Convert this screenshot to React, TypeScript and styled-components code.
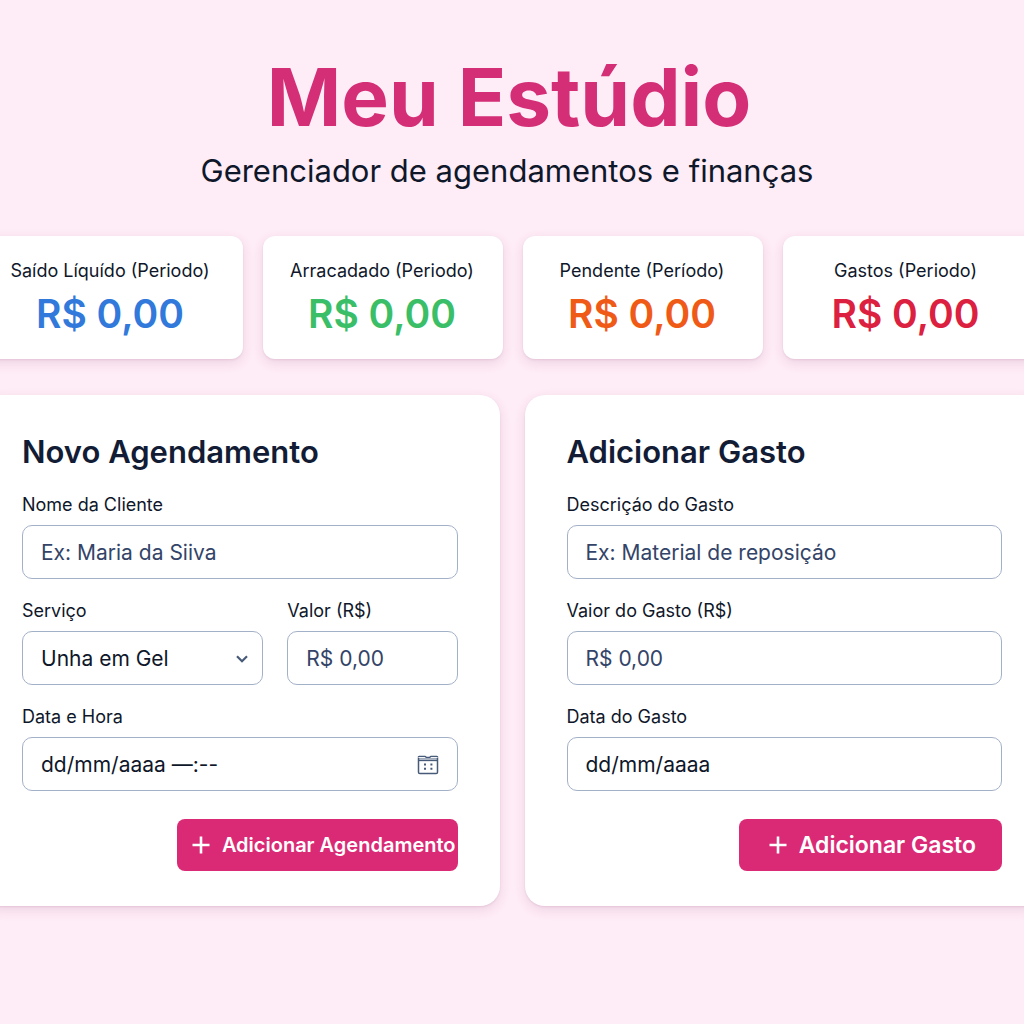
import React, { useState } from "react";
import styled, { createGlobalStyle } from "styled-components";

const GlobalStyle = createGlobalStyle`
  *, *::before, *::after { box-sizing: border-box; }
  body {
    margin: 0;
    min-height: 100vh;
    background: #feecf6;
    color: #0f172a;
    font-family: Inter, "Liberation Sans", sans-serif;
  }
`;

const Page = styled.div`
  overflow: hidden;
  padding: 51px 0 118px;
`;

const Header = styled.header`
  text-align: center;
  margin-bottom: 45px;
  padding-right: 10px;
`;

const Title = styled.h1`
  margin: 0;
  padding-left: 4px;
  color: #d42e77;
  font-size: 80px;
  line-height: 92px;
  font-weight: 700;
`;

const Subtitle = styled.p`
  margin: 8px 0 0;
  font-size: 31px;
  line-height: 40px;
`;

const Bleed = styled.main`
  margin: 0 -20px;
  display: grid;
  grid-template-columns: minmax(0, 1fr);
  gap: 36px;
`;

const Summary = styled.section`
  display: grid;
  grid-template-columns: minmax(0, 263fr) minmax(0, 240fr) minmax(0, 240fr) minmax(0, 261fr);
  gap: 20px;
`;

const StatCard = styled.article<{ $trim: number }>`
  padding: 21px ${(p) => p.$trim}px 20px 0;
  border-radius: 12px;
  background: #fff;
  text-align: center;
  box-shadow: 0 4px 12px rgba(140, 60, 110, 0.14), 0 1px 2px rgba(140, 60, 110, 0.12);
`;

const StatLabel = styled.h2`
  margin: 0;
  font-size: 18px;
  line-height: 28px;
  font-weight: 400;
`;

const StatValue = styled.p<{ $color: string }>`
  margin: 4px 0 0;
  color: ${(p) => p.$color};
  font-size: 39px;
  line-height: 50px;
  font-weight: 600;
`;

const Panels = styled.div`
  display: grid;
  grid-template-columns: repeat(2, minmax(0, 1fr));
  gap: 25px;
`;

const Panel = styled.form`
  padding: 37px 42px 35px;
  border-radius: 20px;
  background: #fff;
  box-shadow: 0 4px 12px rgba(140, 60, 110, 0.14), 0 1px 2px rgba(140, 60, 110, 0.12);
`;

const PanelTitle = styled.h2`
  margin: 0 0 21px;
  color: #131c35;
  font-size: 31px;
  line-height: 40px;
  font-weight: 600;
`;

const Fields = styled.div`
  display: grid;
  grid-template-columns: minmax(0, 1fr);
  gap: 20px;
`;

const FieldRow = styled.div`
  display: grid;
  grid-template-columns: minmax(0, 241fr) minmax(0, 170fr);
  gap: 24px;
`;

const Field = styled.div`
  display: grid;
  grid-template-columns: minmax(0, 1fr);
  gap: 8px;
`;

const Label = styled.label`
  font-size: 18px;
  line-height: 24px;
`;

const Control = styled.div<{ $select?: boolean }>`
  display: flex;
  align-items: center;
  height: 54px;
  padding: 2px ${(p) => (p.$select ? 13 : 18)}px 0 18px;
  border: 1px solid #a3b1c8;
  border-radius: 10px;
  &:focus-within { border-color: #db2777; }
`;

const Input = styled.input<{ $strong?: boolean }>`
  flex: 1;
  min-width: 0;
  padding: 0;
  border: 0;
  outline: 0;
  background: transparent;
  color: #0f172a;
  font: inherit;
  font-size: 21px;
  line-height: 32px;
  &::placeholder { color: ${(p) => (p.$strong ? "#0f172a" : "#334468")}; opacity: 1; }
`;

const Select = styled.select`
  flex: 1;
  min-width: 0;
  padding: 0;
  border: 0;
  outline: 0;
  appearance: none;
  background: transparent;
  color: #0f172a;
  font: inherit;
  font-size: 21px;
  line-height: 32px;
`;

const IconButton = styled.button`
  display: flex;
  padding: 0;
  border: 0;
  background: none;
  color: #475a78;
  cursor: pointer;
`;

const Actions = styled.div`
  display: flex;
  justify-content: flex-end;
  margin-top: 28px;
`;

const Submit = styled.button<{ $wide?: boolean }>`
  display: flex;
  align-items: center;
  gap: 12px;
  height: 52px;
  padding: ${(p) => (p.$wide ? "0 26px 0 30px" : "0 2px 0 15px")};
  border: 0;
  border-radius: 8px;
  background: #da2975;
  color: #fff;
  font: inherit;
  font-size: ${(p) => (p.$wide ? 23 : 20)}px;
  font-weight: 600;
  white-space: nowrap;
  cursor: pointer;
`;

const PlusIcon = () => (
  <svg width="18" height="18" viewBox="0 0 18 18" fill="none" stroke="currentColor" strokeWidth="2.6" aria-hidden="true">
    <path d="M9 0.5v17M0.5 9h17" />
  </svg>
);

const ChevronIcon = () => (
  <svg width="14" height="8" viewBox="0 0 14 8" fill="none" stroke="#475a78" strokeWidth="2.2" aria-hidden="true">
    <path d="M2 1.2l5 5 5-5" />
  </svg>
);

const CalendarIcon = () => (
  <svg width="22" height="20" viewBox="0 0 22 20" fill="none" stroke="currentColor" strokeWidth="1.5" aria-hidden="true">
    <path d="M1.5 3v14.2q0 1.3 1.3 1.3h16.4q1.3 0 1.3-1.3V3" />
    <path d="M1.2 2.4q0-1 1-1h5.6q1 0 1.4 1h3.6q.4-1 1.4-1h5.6q1 0 1 1" strokeWidth="1.3" />
    <path d="M2 3.6h18" strokeOpacity="0.5" strokeWidth="1.4" />
    <path d="M1.2 5.4h19.6" />
    <path d="M7 9.4h2M13.4 9.4h2M7 13.8h2M13.4 13.8h2" strokeWidth="2" />
  </svg>
);

const stats = [
  { label: "Saído Líquído (Periodo)", color: "#3179da", trim: 3 },
  { label: "Arracadado (Periodo)", color: "#3abf68", trim: 2 },
  { label: "Pendente (Período)", color: "#f05a17", trim: 2 },
  { label: "Gastos (Periodo)", color: "#dc2040", trim: 16 },
];

export default function App() {
  const [service, setService] = useState("Unha em Gel");
  const stop = (e: React.FormEvent) => e.preventDefault();

  return (
    <>
      <GlobalStyle />
      <Page>
        <Header>
          <Title>Meu Estúdio</Title>
          <Subtitle>Gerenciador de agendamentos e finanças</Subtitle>
        </Header>
        <Bleed>
          <Summary>
            {stats.map((s) => (
              <StatCard key={s.label} $trim={s.trim}>
                <StatLabel>{s.label}</StatLabel>
                <StatValue $color={s.color}>R$ 0,00</StatValue>
              </StatCard>
            ))}
          </Summary>
          <Panels>
            <Panel onSubmit={stop}>
              <PanelTitle>Novo Agendamento</PanelTitle>
              <Fields>
                <Field>
                  <Label htmlFor="cliente">Nome da Cliente</Label>
                  <Control><Input id="cliente" placeholder="Ex: Maria da Siiva" /></Control>
                </Field>
                <FieldRow>
                  <Field>
                    <Label htmlFor="servico">Serviço</Label>
                    <Control $select>
                      <Select id="servico" value={service} onChange={(e) => setService(e.target.value)}>
                        <option>Unha em Gel</option>
                      </Select>
                      <ChevronIcon />
                    </Control>
                  </Field>
                  <Field>
                    <Label htmlFor="valor">Valor (R$)</Label>
                    <Control><Input id="valor" inputMode="decimal" placeholder="R$ 0,00" /></Control>
                  </Field>
                </FieldRow>
                <Field>
                  <Label htmlFor="data-hora">Data e Hora</Label>
                  <Control>
                    <Input id="data-hora" $strong placeholder="dd/mm/aaaa —:--" />
                    <IconButton type="button" aria-label="Abrir calendário"><CalendarIcon /></IconButton>
                  </Control>
                </Field>
              </Fields>
              <Actions>
                <Submit type="submit"><PlusIcon />Adicionar Agendamento</Submit>
              </Actions>
            </Panel>
            <Panel onSubmit={stop}>
              <PanelTitle>Adicionar Gasto</PanelTitle>
              <Fields>
                <Field>
                  <Label htmlFor="descricao">Descriçáo do Gasto</Label>
                  <Control><Input id="descricao" placeholder="Ex: Material de reposiçáo" /></Control>
                </Field>
                <Field>
                  <Label htmlFor="valor-gasto">Vaior do Gasto (R$)</Label>
                  <Control><Input id="valor-gasto" inputMode="decimal" placeholder="R$ 0,00" /></Control>
                </Field>
                <Field>
                  <Label htmlFor="data-gasto">Data do Gasto</Label>
                  <Control><Input id="data-gasto" $strong placeholder="dd/mm/aaaa" /></Control>
                </Field>
              </Fields>
              <Actions>
                <Submit type="submit" $wide><PlusIcon />Adicionar Gasto</Submit>
              </Actions>
            </Panel>
          </Panels>
        </Bleed>
      </Page>
    </>
  );
}
